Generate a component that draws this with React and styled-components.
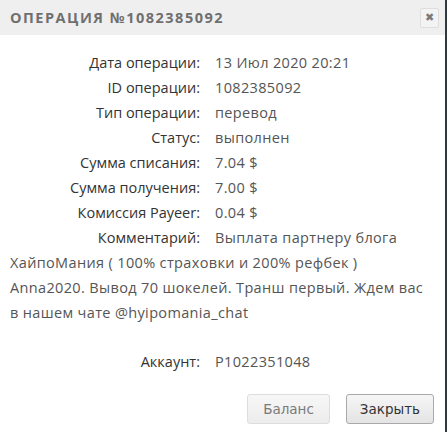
import React from "react";
import styled, { createGlobalStyle } from "styled-components";

const Global = createGlobalStyle`
  html, body { margin: 0; padding: 0; background: #ffffff; }
  body { font-family: "Open Sans", "Noto Sans", sans-serif; }
`;

const Dialog = styled.div`
  width: 445px;
  height: 432px;
  border-right: 2px solid #2f3940;
  background: #ffffff;
  display: flex;
  flex-direction: column;
`;

const Header = styled.div`
  height: 35px;
  background: #efefef;
  display: flex;
  align-items: center;
  justify-content: space-between;
  padding: 0 6px 0 10px;
  box-sizing: border-box;
`;

const Title = styled.div`
  font-family: "Open Sans", sans-serif;
  font-weight: 700;
  font-size: 14.5px;
  letter-spacing: 1.5px;
  color: #6f6f6f;
  text-transform: uppercase;
`;

const CloseButton = styled.button`
  width: 19px;
  height: 20px;
  margin-top: 1px;
  padding: 0;
  border: 1px solid #dedede;
  border-radius: 2px;
  background: #f3f3f3;
  color: #7a7a7a;
  font-family: "DejaVu Sans", sans-serif;
  font-size: 11px;
  font-weight: 700;
  line-height: 18px;
  text-align: center;
`;

const Body = styled.div`
  padding: 15px 8px 0 10px;
  font-family: "Open Sans", sans-serif;
  font-size: 14.5px;
  line-height: 25px;
  color: #555555;
`;

const Row = styled.div`
  margin-top: ${(p) => (p.$gap ? "24px" : "0")};
`;

const Label = styled.span`
  display: inline-block;
  width: 190px;
  margin-right: 15px;
  text-align: right;
  color: #333333;
`;

const Value = styled.span`
  color: #555555;
  letter-spacing: 0.35px;
`;

const Footer = styled.div`
  display: flex;
  justify-content: flex-end;
  gap: 16px;
  padding: 20px 11px 0 0;
`;

const Button = styled.button`
  height: 30px;
  padding: 0 ${(p) => (p.$primary ? "13px" : "15px")};
  border-radius: 3px;
  font-family: "DejaVu Sans", "Liberation Sans", sans-serif;
  font-size: 13.5px;
  border: 1px solid ${(p) => (p.$primary ? "#a9a9a9" : "#dddddd")};
  color: ${(p) => (p.$primary ? "#333333" : "#7a7a7a")};
  background: ${(p) =>
    p.$primary
      ? "linear-gradient(#f6f6f6, #e4e4e4)"
      : "linear-gradient(#f7f7f7, #ececec)"};
`;

const rows = [
  ["Дата операции:", "13 Июл 2020 20:21"],
  ["ID операции:", "1082385092"],
  ["Тип операции:", "перевод"],
  ["Статус:", "выполнен"],
  ["Сумма списания:", "7.04 $"],
  ["Сумма получения:", "7.00 $"],
  ["Комиссия Payeer:", "0.04 $"],
];

const commentLines = [
  "Выплата партнеру блога",
  "ХайпоМания ( 100% страховки и 200% рефбек )",
  "Anna2020. Вывод 70 шокелей. Транш первый. Ждем вас",
  "в нашем чате @hyipomania_chat",
];

export default function App() {
  return (
    <>
      <Global />
      <Dialog>
        <Header>
          <Title>Операция №1082385092</Title>
          <CloseButton>✖</CloseButton>
        </Header>
        <Body>
          {rows.map(([l, v]) => (
            <Row key={l}>
              <Label>{l}</Label>
              <Value>{v}</Value>
            </Row>
          ))}
          <Row>
            <Label>Комментарий:</Label>
            <Value>
              {commentLines.map((line, i) => (
                <React.Fragment key={i}>
                  {i > 0 && <br />}
                  {line}
                </React.Fragment>
              ))}
            </Value>
          </Row>
          <Row $gap>
            <Label>Аккаунт:</Label>
            <Value>P1022351048</Value>
          </Row>
        </Body>
        <Footer>
          <Button>Баланс</Button>
          <Button $primary>Закрыть</Button>
        </Footer>
      </Dialog>
    </>
  );
}
